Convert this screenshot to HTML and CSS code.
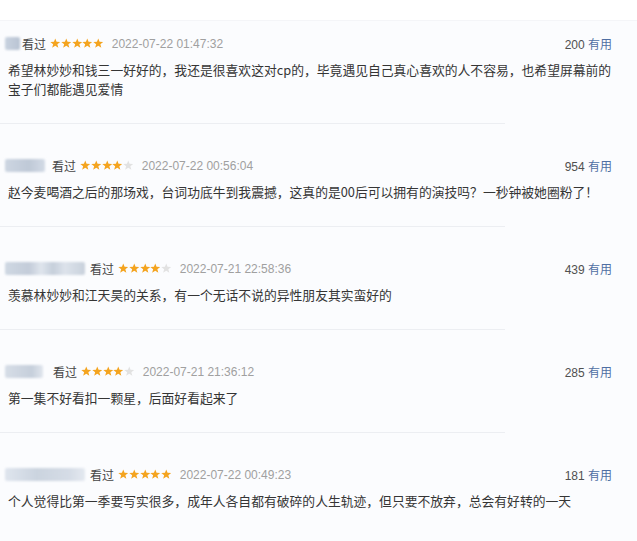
FILE: index.html
```html
<!DOCTYPE html>
<html lang="zh-CN">
<head>
<meta charset="utf-8">
<title>短评</title>
<link rel="stylesheet" href="styles.css">
</head>
<body>
<svg width="0" height="0" class="defs" aria-hidden="true">
  <defs>
    <symbol id="star" viewBox="0 0 10 10">
      <path d="M5 0.4 L6.25 3.65 L9.7 3.8 L7 5.95 L7.95 9.4 L5 7.45 L2.05 9.4 L3 5.95 L0.3 3.8 L3.75 3.65 Z"/>
    </symbol>
  </defs>
</svg>
<div class="topbar"></div>
<main class="list">
  <section class="item first">
    <div class="meta">
      <span class="user u1"></span>
      <span class="watched">看过</span>
      <span class="stars"><svg class="s on"><use href="#star"/></svg><svg class="s on"><use href="#star"/></svg><svg class="s on"><use href="#star"/></svg><svg class="s on"><use href="#star"/></svg><svg class="s on"><use href="#star"/></svg></span>
      <span class="date">2022-07-22 01:47:32</span>
      <span class="votes">200 <span class="useful">有用</span></span>
    </div>
    <p class="text">希望林妙妙和钱三一好好的，我还是很喜欢这对cp的，毕竟遇见自己真心喜欢的人不容易，也希望屏幕前的宝子们都能遇见爱情</p>
  </section>
  <hr class="sep">
  <section class="item">
    <div class="meta">
      <span class="user u2"></span>
      <span class="watched">看过</span>
      <span class="stars"><svg class="s on"><use href="#star"/></svg><svg class="s on"><use href="#star"/></svg><svg class="s on"><use href="#star"/></svg><svg class="s on"><use href="#star"/></svg><svg class="s off"><use href="#star"/></svg></span>
      <span class="date">2022-07-22 00:56:04</span>
      <span class="votes">954 <span class="useful">有用</span></span>
    </div>
    <p class="text">赵今麦喝酒之后的那场戏，台词功底牛到我震撼，这真的是00后可以拥有的演技吗？一秒钟被她圈粉了！</p>
  </section>
  <hr class="sep">
  <section class="item">
    <div class="meta">
      <span class="user u3"></span>
      <span class="watched">看过</span>
      <span class="stars"><svg class="s on"><use href="#star"/></svg><svg class="s on"><use href="#star"/></svg><svg class="s on"><use href="#star"/></svg><svg class="s on"><use href="#star"/></svg><svg class="s off"><use href="#star"/></svg></span>
      <span class="date">2022-07-21 22:58:36</span>
      <span class="votes">439 <span class="useful">有用</span></span>
    </div>
    <p class="text">羡慕林妙妙和江天昊的关系，有一个无话不说的异性朋友其实蛮好的</p>
  </section>
  <hr class="sep">
  <section class="item">
    <div class="meta">
      <span class="user u4"></span>
      <span class="watched w4">看过</span>
      <span class="stars"><svg class="s on"><use href="#star"/></svg><svg class="s on"><use href="#star"/></svg><svg class="s on"><use href="#star"/></svg><svg class="s on"><use href="#star"/></svg><svg class="s off"><use href="#star"/></svg></span>
      <span class="date">2022-07-21 21:36:12</span>
      <span class="votes">285 <span class="useful">有用</span></span>
    </div>
    <p class="text">第一集不好看扣一颗星，后面好看起来了</p>
  </section>
  <hr class="sep">
  <section class="item">
    <div class="meta">
      <span class="user u5"></span>
      <span class="watched">看过</span>
      <span class="stars"><svg class="s on"><use href="#star"/></svg><svg class="s on"><use href="#star"/></svg><svg class="s on"><use href="#star"/></svg><svg class="s on"><use href="#star"/></svg><svg class="s on"><use href="#star"/></svg></span>
      <span class="date">2022-07-22 00:49:23</span>
      <span class="votes">181 <span class="useful">有用</span></span>
    </div>
    <p class="text">个人觉得比第一季要写实很多，成年人各自都有破碎的人生轨迹，但只要不放弃，总会有好转的一天</p>
  </section>
</main>
</body>
</html>
```

FILE: styles.css
```css
html, body {
  margin: 0;
  padding: 0;
}
body {
  background: #fbfcfe;
  font-family: "Noto Sans CJK SC", "Noto Sans", sans-serif;
  color: #353535;
  width: 637px;
  height: 541px;
  overflow: hidden;
}
.defs {
  position: absolute;
  width: 0;
  height: 0;
}
.topbar {
  height: 20px;
  background: #ffffff;
  border-bottom: 1px solid #f4f5f8;
}
.list {
  display: flex;
  flex-direction: column;
}
.item {
  padding: 32px 19px 25px 8px;
}
.item.first {
  padding-top: 13px;
}
.meta {
  display: flex;
  align-items: center;
  height: 19px;
  font-size: 12px;
  padding-right: 6px;
}
.user {
  display: block;
  height: 13px;
  margin-left: -3px;
  border-radius: 2px;
  filter: blur(1.2px);
}
.u1 {
  width: 15px;
  background: linear-gradient(90deg, #c9d3e0, #b9c4d3);
}
.u2 {
  width: 40px;
  margin-right: 5px;
  background: linear-gradient(90deg, #cdd6e2, #bfc9d7 60%, #d3dbe6);
}
.u3 {
  width: 80px;
  margin-right: 3px;
  background: linear-gradient(90deg, #cfd8e3 0%, #c3ccd9 30%, #dfe5ed 45%, #c6cfdb 60%, #dde3eb 75%, #c9d1dc 100%);
}
.u4 {
  width: 38px;
  background: linear-gradient(90deg, #d6dde7, #c6cfdb 70%, #e1e6ee);
}
.u5 {
  width: 80px;
  margin-right: 3px;
  background: linear-gradient(90deg, #dfe5ee, #cbd4df 40%, #d5dce6 80%, #e4e9f0);
}
.watched {
  color: #454545;
  margin-left: 2px;
}
.w4 {
  margin-left: 10px;
}
.stars {
  display: flex;
  gap: 0.3px;
  margin-left: 4px;
}
.s {
  width: 10.5px;
  height: 10.5px;
}
.s.on {
  fill: #f4a41f;
}
.s.off {
  fill: #e2e2e2;
}
.date {
  color: #a0a0a0;
  margin-left: 8px;
  font-family: "Liberation Sans", "Noto Sans", sans-serif;
  font-size: 12px;
}
.votes {
  margin-left: auto;
  color: #505050;
  font-family: "Liberation Sans", "Noto Sans CJK SC", sans-serif;
}
.useful {
  color: #4f6fa3;
  font-family: "Noto Sans CJK SC", sans-serif;
}
.text {
  margin: 7px 0 0 0;
  font-size: 12.8px;
  line-height: 19px;
}
.sep {
  margin: 0;
  width: 505px;
  height: 1px;
  border: 0;
  background: #eceef2;
}
```
